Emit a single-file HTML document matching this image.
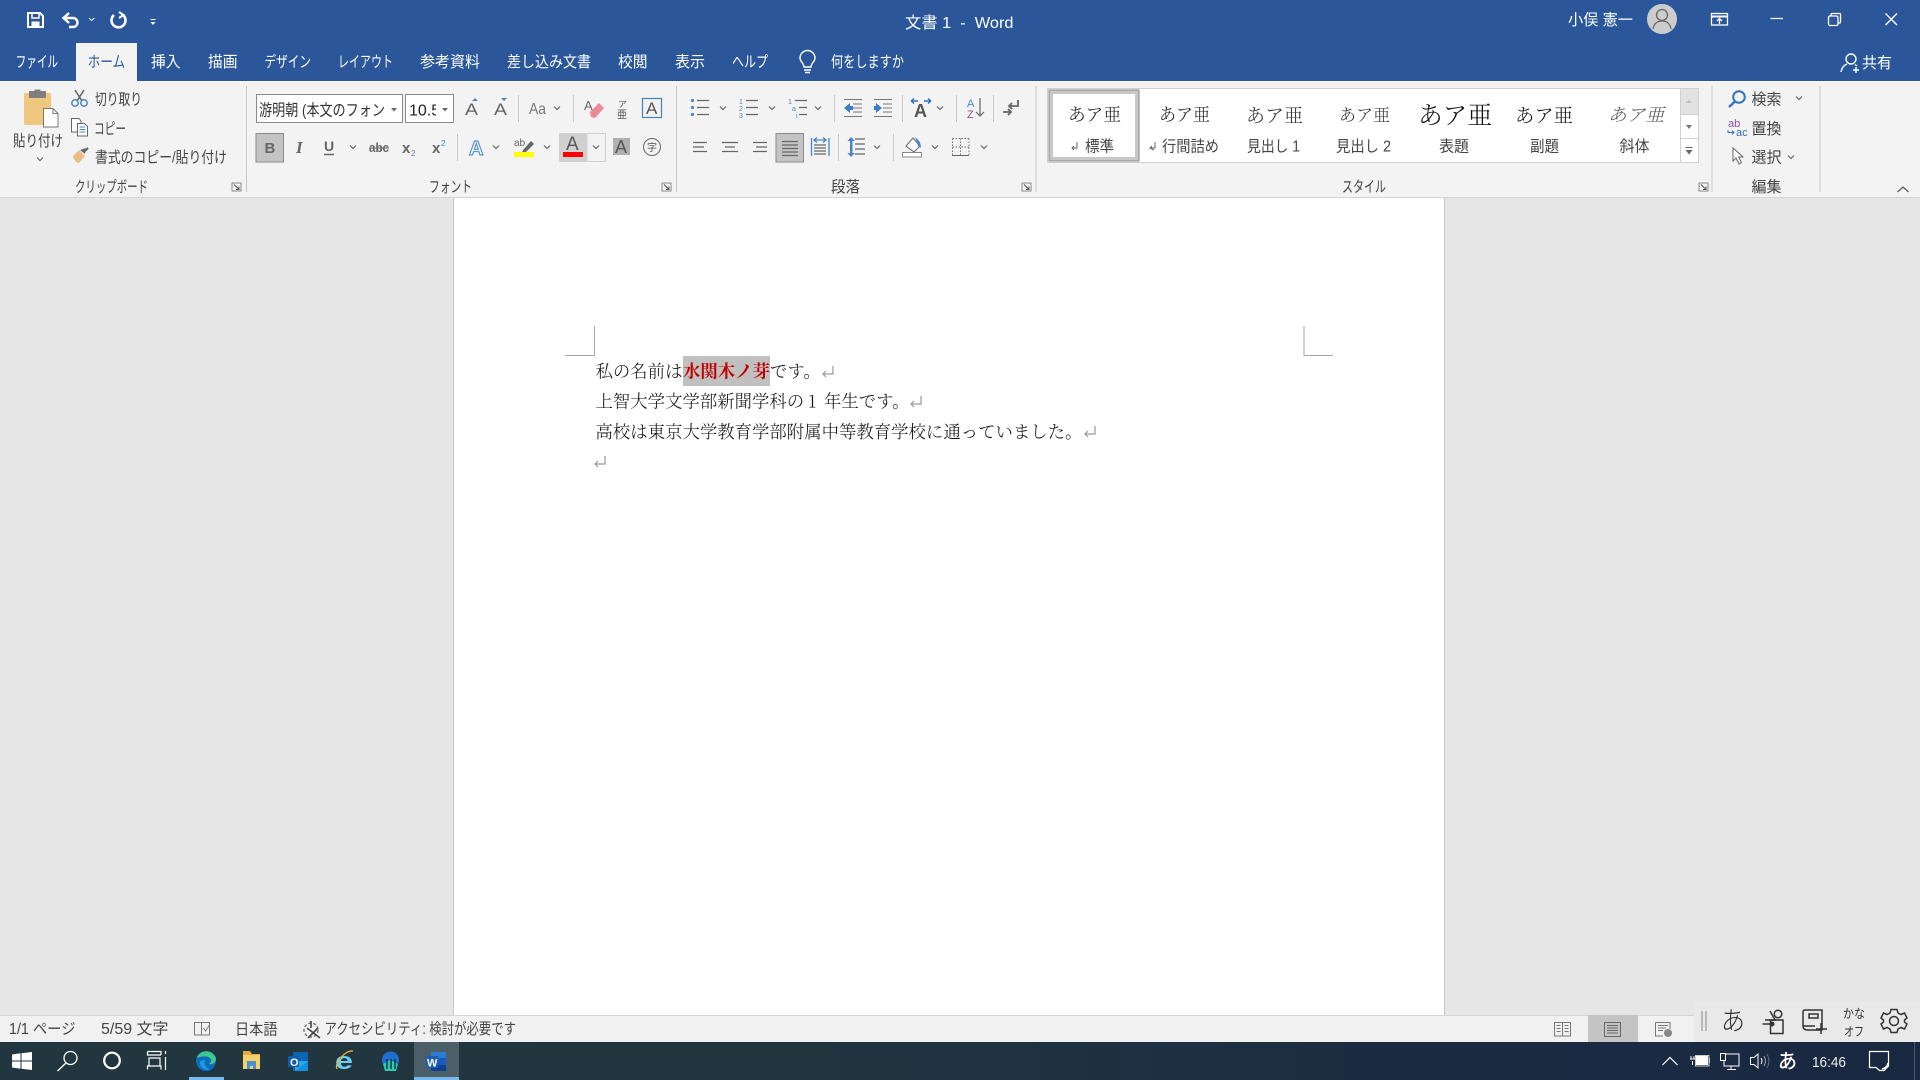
<!DOCTYPE html>
<html lang="ja">
<head>
<meta charset="utf-8">
<title>文書 1 - Word</title>
<style>
html,body{margin:0;padding:0;width:1920px;height:1080px;overflow:hidden;background:#e6e6e6}
svg{display:block;position:absolute;left:0;top:0}
text{font-family:"Liberation Sans","Noto Sans CJK JP",sans-serif;font-size:15.5px;fill:#444;font-weight:400}
.w text,text.w{fill:#fff}
.m text{font-family:"Noto Serif CJK SC","Noto Serif CJK JP",serif;fill:#222;font-weight:300}
.s{fill:none;stroke:#666;stroke-width:1.5}
.b{fill:none;stroke:#4a86c5;stroke-width:1.5}
.l{stroke:#c8c8c8;stroke-width:1;fill:none}
.st{fill:#666}
.d text{font-size:17.4px;fill:#111;font-family:"Noto Serif CJK SC","Noto Serif CJK JP",serif;font-weight:300}
.ln{stroke:#666;stroke-width:1.3}
</style>
</head>
<body>
<svg width="1920" height="1080" viewBox="0 0 1920 1080" xmlns="http://www.w3.org/2000/svg">
<defs>
<path id="chev" d="M-3-1.5 0 1.5 3-1.5" fill="none" stroke="#666" stroke-width="1.2"/>
<path id="ret" d="M5-5V3H-5M-2 0-5 3-2 6" fill="none" stroke="#999" stroke-width="1.2"/>
<g id="lau"><rect x="0" y="0" width="9" height="8" fill="none" stroke="#888"/><path d="M2 1.5 7 6.5M7 3.5V6.5H4" fill="none" stroke="#555"/></g>
<linearGradient id="tb" x1="0" x2="1" y1="0" y2="0"><stop offset="0" stop-color="#22363f"/><stop offset=".42" stop-color="#21353f"/><stop offset=".72" stop-color="#1b2c42"/><stop offset="1" stop-color="#192841"/></linearGradient>
</defs>

<!-- backgrounds -->
<rect x="0" y="0" width="1920" height="81" fill="#2b579a"/>
<rect x="0" y="81" width="1920" height="116" fill="#f3f3f3"/>
<rect x="0" y="197" width="1920" height="1" fill="#d4d4d4"/>
<rect x="0" y="198" width="1920" height="817" fill="#e6e6e6"/>
<rect x="454" y="198" width="990" height="817" fill="#fff"/>
<path d="M453.5 198V1015M1444.5 198V1015" stroke="#c6c6c6"/>
<rect x="0" y="1015" width="1920" height="1" fill="#d4d4d4"/>
<rect x="0" y="1016" width="1920" height="26" fill="#f1f1f1"/>
<rect x="0" y="1042" width="1920" height="38" fill="url(#tb)"/>

<!-- QAT -->
<g fill="none" stroke="#fff" stroke-width="2">
<path d="M28 13H40L43 16V27H28Z"/>
<path d="M32 13V18H39V13" stroke-width="1.5"/>
<rect x="31.500" y="21.500" width="8" height="5.500" fill="#fff" stroke="none"/>
<path d="M63 18H73A4.500 4.500 0 0 1 73 27H69" stroke-width="2.400"/>
<path d="M69 13 63.500 18 69 23" stroke-width="2.400"/>
<path d="M114 15A7 7 0 1 0 123 15" stroke-width="2.600"/>
<path d="M119 12 123.500 15 119 18" stroke-width="2"/>
<path d="M89 18 91.700 20.500 94.400 18" stroke-width="1"/>
<path d="M150.500 19.500H155.500" stroke-width="1"/>
<path d="M150.500 22 153 25 155.500 22Z" fill="#fff" stroke="none"/>
</g>

<!-- title -->
<g class="w">
<text x="905" y="28" style="font-size:16px" xml:space="preserve" textLength="108.500" lengthAdjust="spacingAndGlyphs">文書 1  -  Word</text>
<text x="1568" y="25" textLength="65" lengthAdjust="spacingAndGlyphs">小俣 憲一</text>
</g>
<circle cx="1662" cy="19" r="15" fill="#ccc"/>
<circle cx="1662" cy="15" r="5.500" fill="none" stroke="#666" stroke-width="1.300"/>
<path d="M1653 29C1654 23 1658 21 1662 21S1670 23 1671 29" fill="none" stroke="#666" stroke-width="1.300"/>
<g fill="none" stroke="#fff" stroke-width="1.300">
<rect x="1711.500" y="13.500" width="16" height="11.500"/>
<path d="M1711.500 16.500H1727.500" stroke-width="2"/>
<path d="M1719.500 24V19M1717 21 1719.500 18.500 1722 21"/>
<path d="M1770.500 18.500H1783"/>
<rect x="1828.500" y="16" width="9.500" height="9.500" rx="1.500"/>
<path d="M1831 15.500V14.500Q1831 13.500 1832 13.500H1839.500Q1840.500 13.500 1840.500 14.500V22Q1840.500 23 1839.500 23H1838.500"/>
<path d="M1885.500 13.500 1897 25M1897 13.500 1885.500 25" stroke-width="1.400"/>
</g>

<!-- tabs -->
<rect x="76" y="43" width="61" height="38" fill="#f3f3f3"/>
<g class="w">
<text x="15.600" y="67" textLength="42.500" lengthAdjust="spacingAndGlyphs">ファイル</text>
<text x="151" y="67" textLength="29.500" lengthAdjust="spacingAndGlyphs">挿入</text>
<text x="208" y="67" textLength="29.500" lengthAdjust="spacingAndGlyphs">描画</text>
<text x="264.500" y="67" textLength="46.500" lengthAdjust="spacingAndGlyphs">デザイン</text>
<text x="338" y="67" textLength="55" lengthAdjust="spacingAndGlyphs">レイアウト</text>
<text x="420" y="67" textLength="60" lengthAdjust="spacingAndGlyphs">参考資料</text>
<text x="507" y="67" textLength="84" lengthAdjust="spacingAndGlyphs">差し込み文書</text>
<text x="618" y="67" textLength="29.500" lengthAdjust="spacingAndGlyphs">校閲</text>
<text x="675" y="67" textLength="30" lengthAdjust="spacingAndGlyphs">表示</text>
<text x="732" y="67" textLength="36" lengthAdjust="spacingAndGlyphs">ヘルプ</text>
<text x="831" y="67" textLength="73" lengthAdjust="spacingAndGlyphs">何をしますか</text>
<text x="1862" y="68" textLength="30" lengthAdjust="spacingAndGlyphs">共有</text>
</g>
<text x="87.600" y="67" textLength="37.500" lengthAdjust="spacingAndGlyphs" style="fill:#2b579a">ホーム</text>
<g fill="none" stroke="#fff" stroke-width="1.400">
<path d="M804 67C804 63 800 62 800 58A7.500 7.500 0 0 1 815 58C815 62 811 63 811 67Z"/>
<path d="M804 70H811M805 72.500H810"/>
<circle cx="1851" cy="59" r="5"/>
<path d="M1841 72C1842 67 1844 65 1847 64M1855 64.500 1857 66M1853 70H1859M1856 67V73"/>
</g>

<!-- Clipboard -->
<rect x="24" y="93" width="27" height="32" rx="1.500" fill="#f0c77e"/>
<rect x="29" y="91" width="17" height="7" fill="#7f7f7f"/><rect x="34.500" y="89.500" width="6" height="3" fill="#7f7f7f"/>
<path d="M43.500 108.500H53L58 113.500V127H43.500Z" fill="#fff" stroke="#777"/>
<path d="M53 108.500V113.500H58" fill="none" stroke="#777"/>
<text x="13" y="146" textLength="50" lengthAdjust="spacingAndGlyphs">貼り付け</text>
<use href="#chev" x="40" y="159"/>
<g fill="none" stroke="#666" stroke-width="1.600"><path d="M75 90 82 101M84 90 77 101"/></g>
<circle cx="75" cy="103" r="3.200" fill="none" stroke="#4a86c5" stroke-width="1.500"/><circle cx="84" cy="103" r="3.200" fill="none" stroke="#4a86c5" stroke-width="1.500"/>
<text x="95" y="104.500" textLength="47" lengthAdjust="spacingAndGlyphs">切り取り</text>
<g fill="#fff" stroke="#666"><path d="M71.500 118.500H79L81 121V132H71.500Z"/><path d="M77.500 123.500H84.500L87.500 126.500V136H77.500Z"/></g>
<path d="M79.500 127H85M79.500 129.500H85.500M79.500 132H85.500" stroke="#4a86c5"/>
<text x="94" y="134" textLength="32" lengthAdjust="spacingAndGlyphs">コピー</text>
<path d="M73 156 79 150 85 156 79 163C76 163 74 160 73 156Z" fill="#e9c083"/><path d="M80 150 86 148 85 154Z" fill="#666"/><path d="M85 151 88 148" stroke="#666" stroke-width="2"/>
<text x="95" y="162.500" textLength="132" lengthAdjust="spacingAndGlyphs">書式のコピー/貼り付け</text>
<text x="75" y="192" textLength="73" lengthAdjust="spacingAndGlyphs">クリップボード</text>
<use href="#lau" x="232" y="183"/>
<g class="l"><path d="M246.500 86V192M676.500 86V192M1036 86V192M1712 86V192M1820 86V192"/>
<path d="M518.500 95V122M573.500 95V122M457.500 134V161M834.500 95V122M902.500 95V122M956.500 95V122M993.500 95V122M838.500 134V161M893.500 134V161"/></g>

<!-- Font group -->
<rect x="256.500" y="94.500" width="146" height="28" fill="#fff" stroke="#8a8a8a"/>
<rect x="405.500" y="94.500" width="48" height="28" fill="#fff" stroke="#8a8a8a"/>
<text x="259" y="115.500" textLength="126" lengthAdjust="spacingAndGlyphs" style="fill:#333;font-size:16px">游明朝 (本文のフォン</text>
<text x="409" y="115.500" style="fill:#222;font-size:16px">10.5</text>
<rect x="436" y="98" width="6" height="20" fill="#fff"/>
<path d="M391 108H397L394 111.500ZM442 108H448L445 111.500Z" fill="#666"/>
<text x="465" y="115" style="font-size:17px;fill:#666" textLength="13" lengthAdjust="spacingAndGlyphs">A</text>
<text x="494" y="115" style="font-size:17px;fill:#666" textLength="13" lengthAdjust="spacingAndGlyphs">A</text>
<text x="529" y="114" style="font-size:16px;fill:#777" textLength="17" lengthAdjust="spacingAndGlyphs">Aa</text>
<path d="M472 101 475 98 478 101ZM501 98 504 101 507 98Z" fill="#4a86c5"/>
<use href="#chev" x="557" y="108"/>
<text x="584" y="110" style="font-size:13px;fill:#666">A</text>
<path d="M590 112 599 103 604 108 595 118 591 117Z" fill="#e9899a"/>
<text x="618" y="107" style="font-size:8px;fill:#555" textLength="9" lengthAdjust="spacingAndGlyphs">ア</text>
<text x="617" y="118" style="font-size:11px;fill:#555" textLength="10" lengthAdjust="spacingAndGlyphs">亜</text>
<rect x="642.500" y="98.500" width="19" height="19" fill="none" stroke="#4a7fbb" stroke-width="1.200"/>
<text x="646" y="114" style="font-size:17px;fill:#555">A</text>

<rect x="256" y="133.500" width="27.500" height="28.500" fill="#c4c4c4" stroke="#8a8a8a"/>
<text x="264.500" y="153" style="font-size:15px;font-weight:700;fill:#666">B</text>
<text x="296" y="153" style="font-size:17px;font-weight:700;font-style:italic;fill:#666;font-family:'Liberation Serif',serif">I</text>
<text x="324" y="151" style="font-size:14px;font-weight:700;fill:#666">U</text><path d="M324 154.500H334" stroke="#666" stroke-width="1.500"/>
<use href="#chev" x="353" y="147"/>
<text x="369" y="152" style="font-size:13px;font-weight:700;fill:#666" textLength="20" lengthAdjust="spacingAndGlyphs">abc</text><path d="M369 148H389" stroke="#666"/>
<text x="402" y="153" style="font-size:15px;font-weight:700;fill:#666">x</text><text x="411" y="156" style="font-size:8px;fill:#4a86c5">2</text>
<text x="432" y="153" style="font-size:15px;font-weight:700;fill:#666">x</text><text x="441" y="146" style="font-size:8px;fill:#4a86c5">2</text>
<text x="469" y="155" style="font-size:20px;font-weight:700;fill:#fff;stroke:#5b93d0;stroke-width:1.200">A</text>
<use href="#chev" x="496" y="147"/>
<text x="514" y="146" style="font-size:10px;fill:#666">ab</text>
<path d="M523 150 531 141 534 144 526 152 522 153Z" fill="#666"/>
<rect x="514" y="152" width="20" height="5" fill="#ff0"/>
<use href="#chev" x="547" y="147"/>
<rect x="559" y="133" width="28" height="29" fill="#d0d0d0"/>
<rect x="587" y="133.500" width="18.500" height="28" fill="#f3f3f3" stroke="#d0d0d0"/>
<text x="566" y="150" style="font-size:19px;fill:#555">A</text>
<rect x="563" y="152" width="20" height="5" fill="#f00"/>
<use href="#chev" x="596" y="147"/>
<rect x="613" y="138" width="17" height="17" fill="#b0b0b0"/>
<text x="615" y="153" style="font-size:18px;fill:#555">A</text>
<circle cx="652" cy="147" r="8.500" fill="none" stroke="#666"/>
<text x="647" y="151" style="font-size:10px;fill:#555">字</text>
<text x="429" y="192" textLength="43" lengthAdjust="spacingAndGlyphs">フォント</text>
<use href="#lau" x="662" y="183"/>

<!-- Paragraph -->
<g fill="#4a86c5"><circle cx="692.500" cy="100.500" r="1.600"/><circle cx="692.500" cy="107.500" r="1.600"/><circle cx="692.500" cy="114.500" r="1.600"/></g>
<path class="ln" d="M697 100.500H709M697 107.500H709M697 114.500H709M746 100.500H758M746 107.500H758M746 114.500H758M795 100.500H807M799 107.500H807M799 114.500H807"/>
<use href="#chev" x="723" y="108"/><use href="#chev" x="772" y="108"/><use href="#chev" x="818" y="108"/>
<text x="739" y="104" style="font-size:7px;fill:#4a86c5">1</text><text x="739" y="111" style="font-size:7px;fill:#4a86c5">2</text><text x="739" y="118" style="font-size:7px;fill:#4a86c5">3</text>
<text x="788" y="104" style="font-size:7px;fill:#4a86c5">1</text><text x="792" y="111" style="font-size:7px;fill:#4a86c5">a</text><text x="796" y="118" style="font-size:7px;fill:#4a86c5">i</text>
<path d="M844 99.500H862M853 104H862M853 108H862M853 112H862M844 116.500H862M874 99.500H892M883 104H892M883 108H892M883 112H892M874 116.500H892" stroke="#777" stroke-width="1"/>
<path d="M844 108 850 103V106H853V110H850V113ZM882 108 876 103V106H874V110H876V113Z" fill="#3b7ec3"/>
<text x="914" y="117" style="font-size:18px;font-weight:700;fill:#555">A</text>
<path d="M911 101H918M911 101 914 98.500M911 101 914 103.500M931 101H924M931 101 928 98.500M931 101 928 103.500" stroke="#2f73b9" stroke-width="1.400" fill="none"/>
<use href="#chev" x="940" y="108"/>
<text x="967" y="107" style="font-size:11px;fill:#4a86c5">A</text><text x="967" y="118" style="font-size:11px;fill:#8a55ab">Z</text>
<path d="M980 98V116M976 112 980 116 984 112" stroke="#666" fill="none" stroke-width="1.200"/>
<path d="M1018 100V106H1009M1012 103 1009 106 1012 109M1003 112H1011M1008 109 1011 112 1008 115" stroke="#666" fill="none" stroke-width="1.800"/>

<path class="ln" d="M693 142.500H707M693 147H704M693 151.500H707M722 142.500H738M725 147H735M722 151.500H738M753 142.500H767M756 147H767M753 151.500H767"/>
<rect x="776" y="133.500" width="27.500" height="28.500" fill="#c4c4c4" stroke="#8a8a8a"/>
<path class="ln" d="M782 141.500H798M782 145H798M782 148.500H798M782 152H798M782 155.500H798"/>
<path d="M811.500 138V156M829 138V156" stroke="#4a86c5" stroke-width="1.300"/>
<path d="M814 140H826M817 137.500 814 140 817 142.500M823 137.500 826 140 823 142.500" stroke="#4a86c5" fill="none" stroke-width="1.300"/>
<path class="ln" d="M814 145H826M814 148H826M814 151H826M814 154H826"/>
<path d="M851 137 855 141H852.500V153H855L851 157 847.500 153H850V141H847.500Z" fill="#4a86c5"/>
<path class="ln" d="M855 139H865M855 144H865M855 149H865M855 154H865"/>
<use href="#chev" x="877" y="147"/>
<rect x="902.500" y="152.500" width="19" height="4.500" fill="#fff" stroke="#888"/>
<path d="M906 146 913 138 920 146 914 152Z" fill="#fff" stroke="#666"/><path d="M915 137Q921 141 921 148L918 146Z" fill="#4a86c5"/>
<use href="#chev" x="935" y="147"/>
<path d="M952.500 138.500H969M952.500 147H969M960.500 138.500V155M952.500 138.500V155M969 138.500V155" stroke="#777" stroke-dasharray="1.500 1.500" fill="none"/>
<path d="M952 155.500H969" stroke="#666"/>
<use href="#chev" x="984" y="147"/>
<text x="831" y="192" textLength="29" lengthAdjust="spacingAndGlyphs">段落</text>
<use href="#lau" x="1022" y="183"/>

<!-- Styles -->
<rect x="1047.500" y="88.500" width="651" height="74" fill="#fff" stroke="#d0d0d0"/>
<rect x="1051" y="92" width="86" height="67" fill="#fff" stroke="#c8c8c8" stroke-width="4"/>
<rect x="1049" y="90" width="90" height="71" fill="none" stroke="#8a8a8a"/>
<g class="m">
<text x="1068" y="121" style="font-size:18px" textLength="53" lengthAdjust="spacingAndGlyphs">あア亜</text>
<text x="1159" y="121" style="font-size:18px" textLength="51" lengthAdjust="spacingAndGlyphs">あア亜</text>
<text x="1246" y="122" style="font-size:19px;fill:#333" textLength="57" lengthAdjust="spacingAndGlyphs">あア亜</text>
<text x="1339" y="121" style="font-size:17px;fill:#333" textLength="51" lengthAdjust="spacingAndGlyphs">あア亜</text>
<text x="1418" y="124" style="font-size:25px;fill:#111" textLength="74" lengthAdjust="spacingAndGlyphs">あア亜</text>
<text x="1515" y="122" style="font-size:19px;fill:#111" textLength="58" lengthAdjust="spacingAndGlyphs">あア亜</text>
<text x="1608" y="121" style="font-size:18px;font-style:italic;fill:#555" textLength="56" lengthAdjust="spacingAndGlyphs">あア亜</text>
</g>
<path d="M1077 142V148H1072M1074 146 1072 148 1074 150M1155 142V148H1150M1152 146 1150 148 1154 150" fill="none" stroke="#666"/>
<text x="1085" y="151.500" textLength="29" lengthAdjust="spacingAndGlyphs">標準</text>
<text x="1162" y="151.500" textLength="57" lengthAdjust="spacingAndGlyphs">行間詰め</text>
<text x="1247" y="151.500" textLength="53" lengthAdjust="spacingAndGlyphs">見出し 1</text>
<text x="1336" y="151.500" textLength="55" lengthAdjust="spacingAndGlyphs">見出し 2</text>
<text x="1439" y="151.500" textLength="30" lengthAdjust="spacingAndGlyphs">表題</text>
<text x="1530" y="151.500" textLength="29" lengthAdjust="spacingAndGlyphs">副題</text>
<text x="1619.500" y="151.500" textLength="30" lengthAdjust="spacingAndGlyphs">斜体</text>
<rect x="1680.500" y="88.500" width="18" height="26" fill="#e2e2e2" stroke="#d0d0d0"/>
<rect x="1680.500" y="114.500" width="18" height="24" fill="#fff" stroke="#d0d0d0"/>
<rect x="1680.500" y="138.500" width="18" height="24" fill="#fff" stroke="#d0d0d0"/>
<path d="M1686 103H1692L1689 100Z" fill="#bbb"/><path d="M1686 125H1692L1689 129Z" fill="#777"/>
<path d="M1685.500 147.500H1692.500" stroke="#666"/><path d="M1685.500 150H1692.500L1689 154.500Z" fill="#666"/>
<text x="1342" y="192" textLength="44" lengthAdjust="spacingAndGlyphs">スタイル</text>
<use href="#lau" x="1699" y="183"/>

<!-- Editing -->
<circle cx="1739" cy="97" r="5.800" fill="none" stroke="#2f73b9" stroke-width="2"/>
<path d="M1735 101.500 1729 107" stroke="#2f73b9" stroke-width="2.400"/>
<text x="1751.500" y="104.500" textLength="30" lengthAdjust="spacingAndGlyphs">検索</text>
<use href="#chev" x="1799" y="98"/>
<text x="1728" y="127" style="font-size:11px;fill:#8a55ab">ab</text>
<text x="1736" y="136" style="font-size:11px;fill:#2f73b9">ac</text>
<path d="M1728 130V132.500H1734M1732 130.500 1734 132.500 1732 134.500" stroke="#2f73b9" fill="none"/>
<text x="1751.500" y="134" textLength="30" lengthAdjust="spacingAndGlyphs">置換</text>
<path d="M1733 148V161L1736 158 1739 164 1741.500 162.500 1738.500 157H1743Z" fill="#fff" stroke="#666"/>
<text x="1751.500" y="162.500" textLength="30" lengthAdjust="spacingAndGlyphs">選択</text>
<use href="#chev" x="1791" y="157"/>
<text x="1751.500" y="192" textLength="30" lengthAdjust="spacingAndGlyphs">編集</text>
<path d="M1897.500 192 1903 187 1908.500 192" fill="none" stroke="#555" stroke-width="1.200"/>

<!-- Document -->
<path d="M594.500 326V355.500H565M1304 326V355.500H1333" fill="none" stroke="#a6a6a6"/>
<rect x="683" y="356" width="87" height="30" fill="#c0c0c0"/>
<g class="d">
<text x="595.500" y="377.500">私の名前は</text>
<text x="683" y="377.500" style="fill:#c00000;font-weight:700">水関木ノ芽</text>
<text x="770" y="377.500">です。</text>
<text x="595.500" y="407.500">上智大学文学部新聞学科の</text>
<text x="808" y="407.500">1</text>
<text x="824" y="407.500">年生です。</text>
<text x="595.500" y="438">高校は東京大学教育学部附属中等教育学校に通っていました。</text>
</g>
<use href="#ret" x="828" y="371"/><use href="#ret" x="916" y="401"/><use href="#ret" x="1090" y="431"/><use href="#ret" x="600" y="461"/>

<!-- Status bar -->
<text x="9" y="1034" textLength="66.500" lengthAdjust="spacingAndGlyphs">1/1 ページ</text>
<text x="101" y="1034" textLength="67.500" lengthAdjust="spacingAndGlyphs">5/59 文字</text>
<text x="235" y="1034.500" textLength="42.500" lengthAdjust="spacingAndGlyphs">日本語</text>
<text x="324.500" y="1034" textLength="191.500" lengthAdjust="spacingAndGlyphs">アクセシビリティ: 検討が必要です</text>
<path d="M194.500 1022.500H201.500V1035H194.500ZM201.500 1022.500H209.500V1035H201.500ZM203.500 1028 205.500 1031 209.500 1025" fill="none" stroke="#777"/>
<circle cx="311" cy="1030" r="7" fill="none" stroke="#666" stroke-width="1.300" stroke-dasharray="3 2"/>
<path d="M311 1021V1028M307 1028 320 1038M318 1028 308 1038" stroke="#444" stroke-width="1.600" fill="none"/>

<!-- view buttons -->
<path d="M1554.500 1022.500H1562.500V1036H1554.500ZM1562.500 1022.500H1570.500V1036H1562.500ZM1556.500 1025.500H1560.500M1556.500 1028.500H1560.500M1556.500 1031.500H1560.500M1564.500 1025.500H1568.500M1564.500 1028.500H1568.500M1564.500 1031.500H1568.500" fill="none" stroke="#777"/>
<rect x="1588" y="1015" width="50" height="27" fill="#c4c4c4"/>
<rect x="1604.500" y="1022.500" width="16" height="14" fill="none" stroke="#666"/>
<path d="M1607 1025.500H1618M1607 1028H1618M1607 1030.500H1618M1607 1033H1618" stroke="#666"/>
<path d="M1655.500 1022.500H1670V1029M1655.500 1022.500V1036H1663M1658 1025.500H1668M1658 1028H1666M1658 1030.500H1663" fill="none" stroke="#777"/>
<circle cx="1668" cy="1033" r="4" fill="#888"/>

<!-- IME bar -->
<rect x="1694" y="1002" width="226" height="40" fill="#e9e9e9"/>
<path d="M1702 1011V1031M1706 1011V1031" stroke="#b8b8b8" stroke-width="2"/>
<g fill="none" stroke="#333" stroke-width="1.500">
<rect x="1770.500" y="1020" width="12.500" height="13.500"/>
<path d="M1762.500 1024H1773M1770 1011 1775 1020M1765 1020H1776"/>
<circle cx="1778" cy="1014" r="3.800"/>
<circle cx="1772" cy="1024" r="1.800" fill="#333"/>
<path d="M1805 1010H1822V1030H1808Q1803 1030 1803 1026V1012Q1803 1010 1805 1010ZM1803 1026H1815M1809 1014H1818V1018H1809ZM1821 1023V1034M1816 1029H1827"/>
</g>
<text x="1721" y="1030" style="font-size:26px;fill:#333;font-weight:300" textLength="24" lengthAdjust="spacingAndGlyphs">あ</text>
<text x="1843" y="1018" style="font-size:12.5px;fill:#333" textLength="22" lengthAdjust="spacingAndGlyphs">かな</text>
<text x="1844" y="1036" style="font-size:12.5px;fill:#333" textLength="20" lengthAdjust="spacingAndGlyphs">オフ</text>
<g fill="none" stroke="#333" stroke-width="1.500">
<circle cx="1894" cy="1021" r="4.500"/>
<path d="M1891 1009.500H1897L1898 1013 1901 1014.500 1904.500 1013 1907 1018 1904.500 1020V1022L1907 1024 1904.500 1029 1901 1027.500 1898 1029 1897 1032.500H1891L1890 1029 1887 1027.500 1883.500 1029 1881 1024 1883.500 1022V1020L1881 1018 1883.500 1013 1887 1014.500 1890 1013Z"/>
</g>

<!-- Taskbar left -->
<path d="M12 1054.500 20.500 1053.300V1060.500H12ZM21.500 1053.200 32 1052V1060.500H21.500ZM12 1061.500H20.500V1068.700L12 1067.500ZM21.500 1061.500H32V1070L21.500 1068.800Z" fill="#fff"/>
<circle cx="70.500" cy="1058" r="6.500" fill="none" stroke="#fff" stroke-width="1.300"/>
<path d="M66 1063 57.500 1071" stroke="#fff" stroke-width="1.400"/>
<circle cx="112" cy="1060.500" r="7.800" fill="none" stroke="#fff" stroke-width="2.200"/>
<path d="M147.500 1051.500V1055H161M147.500 1051.500H161V1055M149 1058H160V1066H149ZM147.500 1069.500V1066H161V1069.500M165.500 1051V1054M165.500 1057V1070" fill="none" stroke="#fff" stroke-width="1.200"/>
<rect x="414" y="1042" width="45" height="38" fill="#4c5e67"/>
<rect x="189" y="1077" width="35" height="3" fill="#76b9ed"/>
<rect x="414" y="1077" width="45" height="3" fill="#76b9ed"/>
<!-- edge -->
<circle cx="206" cy="1061" r="10" fill="#0f6cbd"/>
<path d="M197 1058C199 1050 212 1048 216 1058 216.500 1062 213 1065 209 1064 212 1062 212 1058 207 1056.500 203 1056 199 1057 197 1058Z" fill="#3dc88f"/>
<path d="M200 1063C200 1068 206 1071 211 1069 206 1069 203.500 1064 205 1060 202 1060 200 1061 200 1063Z" fill="#1b9de2"/>
<!-- explorer -->
<path d="M243 1054V1051H250L252 1054H260V1069H243Z" fill="#e8a93a"/>
<rect x="243" y="1055" width="17" height="14" fill="#f5d16b"/>
<path d="M247 1069V1064H256V1069H253V1066H250V1069Z" fill="#4a8fd1"/>
<rect x="247" y="1061" width="9" height="3" fill="#4a8fd1"/>
<!-- outlook -->
<rect x="293" y="1052" width="15" height="19" fill="#0a66b5"/>
<path d="M295 1061 308 1061V1071H295Z" fill="#28a8ea"/>
<path d="M295 1071 308 1061 308 1071Z" fill="#1490df"/>
<rect x="288" y="1056" width="11" height="11" fill="#0f5ba7"/>
<text x="290" y="1066" style="font-size:11px;font-weight:700;fill:#fff;font-family:'Liberation Sans',sans-serif">O</text>
<!-- ie -->
<text x="335" y="1069" style="font-size:24px;font-weight:700;fill:#6ecff5;font-family:'Liberation Sans',sans-serif" textLength="18" lengthAdjust="spacingAndGlyphs">e</text>
<path d="M337 1069C334 1063 345 1050 353 1051" fill="none" stroke="#e5b22e" stroke-width="1.300"/>
<!-- net -->
<circle cx="390.500" cy="1060" r="8.500" fill="#1e6fd0"/>
<path d="M383 1064 390 1060 398 1064 396 1071H385Z" fill="#2fc7b5"/>
<path d="M387 1059V1069M391 1059V1069M395 1059V1069" stroke="#0c2430" stroke-width="1.300"/>
<!-- word -->
<rect x="431" y="1052" width="15" height="19" fill="#2b7cd3"/>
<rect x="431" y="1058" width="15" height="7" fill="#185abd"/>
<rect x="431" y="1065" width="15" height="6" fill="#103f91"/>
<rect x="426" y="1056" width="12" height="12" fill="#1a5fb4"/>
<text x="427" y="1066.500" style="font-size:11px;font-weight:700;fill:#fff;font-family:'Liberation Sans',sans-serif">W</text>

<!-- Taskbar right -->
<path d="M1662.500 1065 1670 1057.500 1677.500 1065" fill="none" stroke="#fff" stroke-width="1.200"/>
<rect x="1696" y="1056" width="12" height="9" fill="#fff"/><rect x="1695.500" y="1055.500" width="13.500" height="10.500" fill="none" stroke="#ccc"/><rect x="1709" y="1058" width="1" height="5" fill="#ccc"/>
<path d="M1691 1056V1059M1694 1056V1059M1690 1059H1695M1692.500 1061V1065" stroke="#fff" fill="none"/>
<path d="M1724 1054H1739V1066H1724ZM1731 1066V1069M1727 1069.500H1736" fill="none" stroke="#fff"/>
<rect x="1720.500" y="1053.500" width="5" height="7" fill="#1a2b42" stroke="#fff"/>
<path d="M1750.500 1057.500H1754L1758 1054V1068L1754 1064.500H1750.500Z" fill="none" stroke="#fff"/>
<path d="M1761 1058Q1763 1061 1761 1064" fill="none" stroke="#fff"/>
<path d="M1764 1056Q1767 1061 1764 1066" fill="none" stroke="#aaa"/>
<path d="M1767 1054Q1771 1061 1767 1068" fill="none" stroke="#667"/>
<text x="1778" y="1068" style="font-size:20px;font-weight:500;fill:#fff" textLength="19" lengthAdjust="spacingAndGlyphs">あ</text>
<text x="1812" y="1067" style="font-size:14.5px;fill:#eee" textLength="34" lengthAdjust="spacingAndGlyphs">16:46</text>
<path d="M1869.500 1051.500H1888.500V1066L1884 1070.500H1879.500L1876 1067.500H1869.500Z" fill="none" stroke="#fff" stroke-width="1.200"/>
<path d="M1882 1069Q1887 1068 1888 1063" fill="none" stroke="#fff" stroke-width="1.500"/>
<path d="M1914.500 1042V1080" stroke="#556"/>
</svg>
</body>
</html>
